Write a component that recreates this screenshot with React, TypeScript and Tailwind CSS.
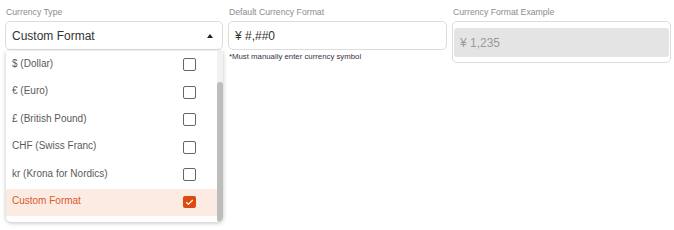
import { Check } from 'lucide-react';

const options = [
  '$ (Dollar)',
  '€ (Euro)',
  '£ (British Pound)',
  'CHF (Swiss Franc)',
  'kr (Krona for Nordics)',
  'Custom Format',
];

const selected = 'Custom Format';

function Label({ children }: { children: React.ReactNode }) {
  return <div className="text-[8.7px] leading-[12px] text-[#8c8c8c] pl-[1px] mb-[3px]">{children}</div>;
}

export default function App() {
  return (
    <div
      className="w-[674px] h-[230px] bg-white flex gap-[5px] pl-[5px] pt-[6px]"
      style={{ fontFamily: '"Liberation Sans", Arial, sans-serif' }}
    >
      {/* Currency Type */}
      <div className="w-[218px] relative">
        <Label>Currency Type</Label>
        <div className="h-[29px] border border-[#dcdcdc] rounded-[5px] flex items-center justify-between pl-[6px] pr-[9px]">
          <span className="text-[12px] text-[#333]">Custom Format</span>
          <span className="w-0 h-0 border-l-[3.5px] border-r-[3.5px] border-b-[4px] border-l-transparent border-r-transparent border-b-[#222]" />
        </div>

        {/* Dropdown menu */}
        <div className="absolute left-[1px] right-0 top-[45px] h-[171px] bg-white rounded-b-[5px] shadow-[0_1px_4px_rgba(0,0,0,0.25)] flex overflow-hidden">
          <div className="flex-1 flex flex-col">
            {options.map((opt) => {
              const active = opt === selected;
              return (
                <div
                  key={opt}
                  className={`h-[27.5px] flex items-center justify-between pl-[6px] pr-[21px] ${
                    active ? 'bg-[#fcebe3]' : ''
                  }`}
                >
                  <span className={`text-[10px] -mt-[3px] ${active ? 'text-[#d95a2b]' : 'text-[#5a5a5a]'}`}>
                    {opt}
                  </span>
                  {active ? (
                    <span className="w-[13px] h-[12px] rounded-[2px] bg-[#dd4a10] flex items-center justify-center">
                      <Check className="w-[9px] h-[9px] text-white" strokeWidth={3} />
                    </span>
                  ) : (
                    <span className="w-[13px] h-[13px] rounded-[2px] border-[1.5px] border-[#666]" />
                  )}
                </div>
              );
            })}
          </div>
          <div className="w-[6px] bg-[#f1f1f1] flex flex-col">
            <div className="mt-[31px] flex-1 bg-[#bdbdbd] rounded-[3px]" />
          </div>
        </div>
      </div>

      {/* Default Currency Format */}
      <div className="w-[219px]">
        <Label>Default Currency Format</Label>
        <div className="h-[29px] border border-[#dcdcdc] rounded-[5px] flex items-center pl-[6px]">
          <span className="text-[12px] text-[#333]">¥ #,##0</span>
        </div>
        <div className="text-[7.8px] leading-[10px] text-[#3a2f45] mt-[2px] pl-[1px]">*Must manually enter currency symbol</div>
      </div>

      {/* Currency Format Example */}
      <div className="w-[219px]">
        <Label>Currency Format Example</Label>
        <div className="h-[42px] border border-[#dcdcdc] rounded-[5px] px-[1px] pt-[6px]">
          <div className="h-[29px] bg-[#e4e4e5] rounded-[3px] flex items-center pl-[6px]">
            <span className="text-[12px] text-[#9a9a9a]">¥ 1,235</span>
          </div>
        </div>
      </div>
    </div>
  );
}
